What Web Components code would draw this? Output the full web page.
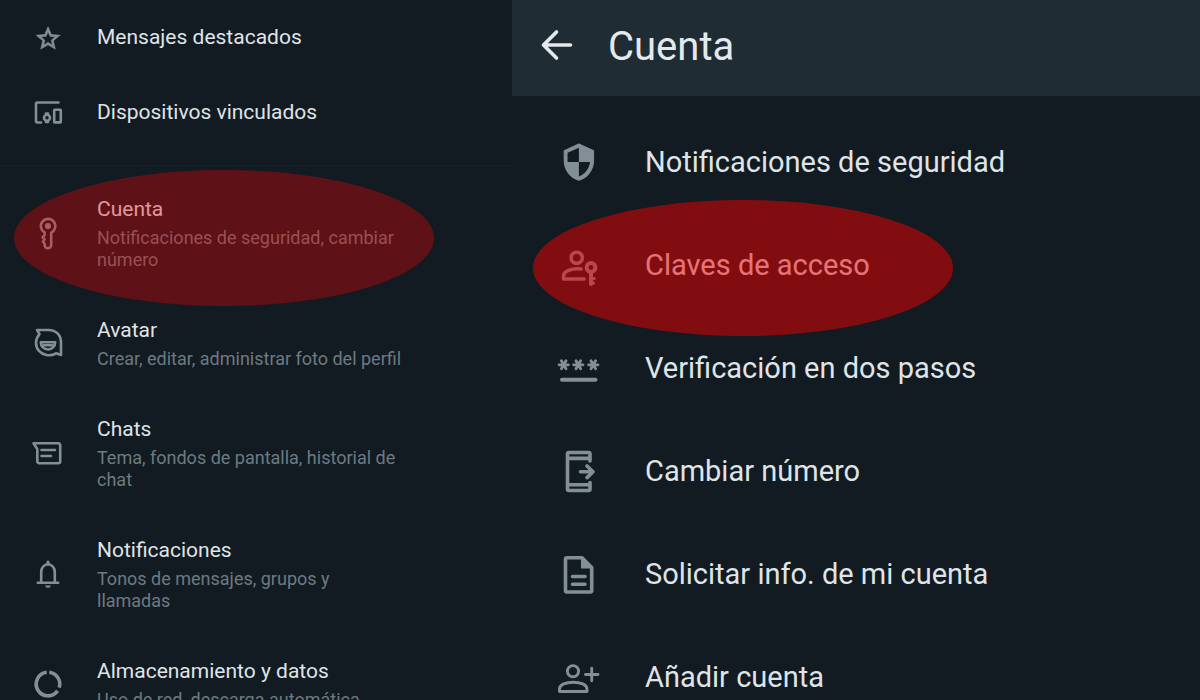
<!DOCTYPE html>
<html lang="es">
<head>
<meta charset="utf-8">
<title>Cuenta</title>
<style>
  body { margin: 0; font-family: Roboto, "Noto Sans", sans-serif; background: #131b22; }
</style>
</head>
<body>
<settings-app></settings-app>
<script>
const ICONS = {
  star: `<path fill="currentColor" stroke-width=".6" transform="translate(6 7.5) scale(1.17)" d="M22 9.24l-7.19-.62L12 2 9.19 8.63 2 9.24l5.46 4.73L5.82 21 12 17.27 18.18 21l-1.63-7.03L22 9.24zM12 15.4l-3.76 2.27 1-4.28-3.32-2.88 4.38-.38L12 6.1l1.71 4.04 4.38.38-3.32 2.88 1 4.28L12 15.4z"/>`,
  devices: `<path d="M30.5 10.5H9.5a1.5 1.5 0 0 0-1.5 1.5V29a1.5 1.5 0 0 0 1.5 1.5H13"/><circle cx="19" cy="25.7" r="3"/><path d="M18 21.600h2M18 30h2"/><rect x="26.2" y="17.8" width="6.6" height="12.6" rx=".5"/>`,
  key: `<path d="M16.6 19.4V22l-2 2.4 2 2-1.6 2.4 1.6 2V32a3.3 3.3 0 0 0 6.6 0V19.6A7.2 7.2 0 1 0 16.6 19.4Z"/><circle cx="20" cy="13" r="1.8" fill="currentColor"/>`,
  avatar: `<path d="M9 7h11.5C28 7 33 12 33 19.5V32l-5-1.7C24.5 32.5 21 32.5 18.500 32 12.5 31 8 26 8 20c0-4 1.5-6.5 3.5-8.8Z"/><path d="M12.8 19.3h14.4a7.2 7.2 0 0 1-14.4 0Z"/><path d="M15.5 22.3h9"/>`,
  chat: `<path d="M5.5 10.3H30.5a1.7 1.7 0 0 1 1.7 1.7V28.5a1.7 1.7 0 0 1-1.7 1.7H11a1.7 1.7 0 0 1-1.7-1.7V16Z"/><path d="M13.5 17h13.5M13.5 23h9.5"/>`,
  bell: `<path d="M13.2 28.5V18a6.8 7.8 0 0 1 13.6 0V28.5M9.8 28.7H30.2"/><path d="M20 8v2" stroke-width="3"/><path d="M17.3 31.5h5.4a2.7 2.2 0 0 1-5.4 0Z" fill="currentColor" stroke="none"/>`,
  data: `<path stroke-width="3.6" stroke-linecap="butt" d="M21.3 8.3A11.8 11.8 0 0 1 31.2 23.6M29.6 26.9A11.8 11.8 0 1 1 18.7 8.3"/>`,
  shield: `<path fill="currentColor" stroke-width=".6" transform="translate(3.6 3.8) scale(1.69)" d="M12 1.3L3.3 5.2v5.8c0 5.4 3.7 10.45 8.7 11.7 5-1.25 8.7-6.3 8.7-11.7V5.2z"/><path fill="#131b22" stroke="none" transform="translate(3.6 3.8) scale(1.69)" d="M12 12h6.6c-.5 4-3.1 7.4-6.6 8.5zM12 12H5.3V6.5l6.700-3z"/>`,
  passkey: `<circle cx="21.7" cy="16.8" r="5.6"/><path d="M26 28C16 27 8.6 30.5 8.6 35v3H29"/><circle cx="36" cy="26.5" r="4.4" stroke-width="4"/><path d="M36 31v12" stroke-width="4"/><path d="M37 37.5h2.2M37 42h1.5" stroke-width="3"/>`,
  pin: `<g stroke-width="2.8"><path d="M4 20.8h9.4M6.4 16.8l4.6 8M11 16.8l-4.6 8"/><path d="M18.6 20.8h9.4M21 16.8l4.6 8M25.6 16.8l-4.6 8"/><path d="M33.6 20.8h9.4M36 16.8l4.6 8M40.6 16.8l-4.6 8"/></g><path stroke-width="4" d="M7 35.8H40.5"/>`,
  phone: `<path d="M35 14V7a1.5 1.5 0 0 0-1.5-1.5H14A1.5 1.5 0 0 0 12.5 7V42a1.5 1.5 0 0 0 1.5 1.5H33.5A1.5 1.5 0 0 0 35 42V35.5"/><path d="M13 11.4H34M13 37.7H34M25.5 24.8H37M32 19l6 5.8-6 5.8"/>`,
  doc: `<path d="M12 7.8H27L36.7 17.5V40.5a1.5 1.5 0 0 1-1.5 1.5H12a1.5 1.5 0 0 1-1.5-1.5V9.3A1.5 1.5 0 0 1 12 7.8Z"/><path d="M26 8v10.5H37Z" fill="currentColor" stroke="none"/><path d="M17.5 26.5H30M17.5 34.2H30"/>`,
  addUser: `<g stroke-width="2.9"><circle cx="18" cy="18.2" r="5.6"/><path d="M4.5 38.5V36C4.5 31.5 11 29.2 18.2 29.2S32 31.5 32 36v2.5Z"/><path d="M30.5 21.5H43M36.7 15.3V27.7"/></g>`,
  back: `<path d="M37.500 24H10.5M23.500 11L10.5 24 23.500 37"/>`
};

class AppIcon extends HTMLElement {
  connectedCallback() {
    const large = this.hasAttribute('large');
    const n = large ? 48 : 40;
    this.attachShadow({ mode: 'open' }).innerHTML = `
      <style>
        :host { display: block; flex: none; width: ${n}px; height: ${n}px; }
        svg { display: block; width: 100%; height: 100%; }
      </style>
      <svg viewBox="0 0 ${n} ${n}" fill="none" stroke="currentColor" stroke-width="${large ? 3.6 : 2.6}"
        stroke-linecap="round" stroke-linejoin="round" aria-hidden="true">${ICONS[this.getAttribute('name')]}</svg>`;
  }
}

class SettingsRow extends HTMLElement {
  connectedCallback() {
    const icon = this.getAttribute('icon');
    this.attachShadow({ mode: 'open' }).innerHTML = `
      <style>
        :host { display: block; position: relative; }
        button {
          display: flex; align-items: center; gap: 29px; box-sizing: border-box; width: 100%;
          margin: 0; padding: 22px 0 22px 28px; border: 0; background: none;
          font: inherit; text-align: left; color: #dfe4e9; cursor: pointer;
        }
        app-icon { color: #838f97; margin-block: -10px; }
        .text { display: flex; flex-direction: column; gap: 3px; max-width: 307px; }
        .title { font-size: 21px; line-height: 30px; white-space: nowrap; }
        ::slotted(span) { font-size: 18px; line-height: 22px; color: #6d7a81; }
        :host([large]) button { gap: 42px; min-height: 103px; padding: 0 0 0 43px; }
        :host([large]) .text { max-width: none; }
        :host([large]) .title { font-size: 29px; line-height: 36px; }
        :host([marked])::after {
          content: ""; position: absolute; left: 14px; top: -2px; width: 420px; height: 136px;
          border-radius: 50%; background: rgba(240, 0, 0, .34); pointer-events: none; z-index: 1;
        }
        :host([marked][large])::after { left: 21px; top: -13px; background: rgba(242, 0, 0, .5); }
      </style>
      <button type="button">
        <app-icon name="${icon}" ${this.hasAttribute('large') ? 'large' : ''}></app-icon>
        <span class="text"><span class="title">${this.getAttribute('label')}</span><slot></slot></span>
      </button>`;
  }
}

class SettingsPanel extends HTMLElement {
  connectedCallback() {
    this.attachShadow({ mode: 'open' }).innerHTML = `
      <style>
        :host { display: block; min-width: 0; overflow: hidden; }
        .shortcuts { display: flex; flex-direction: column; gap: 1px; padding-bottom: 16px; border-bottom: 1px solid #182127; }
        .options { padding-top: 6px; }
      </style>
      <div class="shortcuts">
        <settings-row icon="star" label="Mensajes destacados"></settings-row>
        <settings-row icon="devices" label="Dispositivos vinculados"></settings-row>
      </div>
      <div class="options">
        <settings-row icon="key" label="Cuenta" marked><span>Notificaciones de seguridad, cambiar número</span></settings-row>
        <settings-row icon="avatar" label="Avatar"><span>Crear, editar, administrar foto del perfil</span></settings-row>
        <settings-row icon="chat" label="Chats"><span>Tema, fondos de pantalla, historial de chat</span></settings-row>
        <settings-row icon="bell" label="Notificaciones"><span>Tonos de mensajes, grupos y llamadas</span></settings-row>
        <settings-row icon="data" label="Almacenamiento y datos"><span>Uso de red, descarga automática</span></settings-row>
      </div>`;
  }
}

class AccountPanel extends HTMLElement {
  connectedCallback() {
    this.attachShadow({ mode: 'open' }).innerHTML = `
      <style>
        :host { display: block; min-width: 0; overflow: hidden; }
        header { display: flex; align-items: center; gap: 27px; box-sizing: border-box; height: 96px; padding: 0 21px 6px; background: #202c33; color: #e4e9ed; }
        header button { margin: 0; padding: 0; border: 0; background: none; color: inherit; cursor: pointer; }
        h1 { margin: 0; padding-top: 4px; font-size: 40px; line-height: 48px; font-weight: 400; }
        .options { padding-top: 14px; }
      </style>
      <header>
        <button type="button" aria-label="Atrás"><app-icon name="back" large></app-icon></button>
        <h1>Cuenta</h1>
      </header>
      <div class="options">
        <settings-row large icon="shield" label="Notificaciones de seguridad"></settings-row>
        <settings-row large icon="passkey" label="Claves de acceso" marked></settings-row>
        <settings-row large icon="pin" label="Verificación en dos pasos"></settings-row>
        <settings-row large icon="phone" label="Cambiar número"></settings-row>
        <settings-row large icon="doc" label="Solicitar info. de mi cuenta"></settings-row>
        <settings-row large icon="addUser" label="Añadir cuenta"></settings-row>
      </div>`;
  }
}

class SettingsApp extends HTMLElement {
  connectedCallback() {
    this.attachShadow({ mode: 'open' }).innerHTML = `
      <style>
        :host { display: grid; grid-template-columns: 32fr 43fr; height: 100vh; overflow: hidden; }
      </style>
      <settings-panel></settings-panel>
      <account-panel></account-panel>`;
  }
}

customElements.define('app-icon', AppIcon);
customElements.define('settings-row', SettingsRow);
customElements.define('settings-panel', SettingsPanel);
customElements.define('account-panel', AccountPanel);
customElements.define('settings-app', SettingsApp);
</script>
</body>
</html>
